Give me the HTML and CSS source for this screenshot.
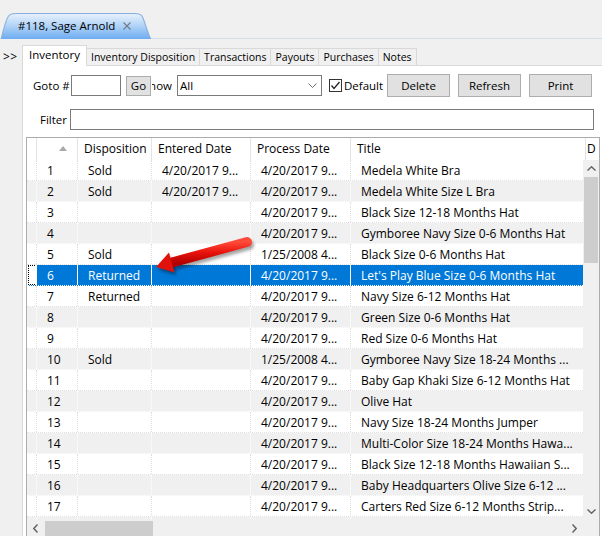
FILE: index.html
```html
<!DOCTYPE html>
<html lang="en">
<head>
    <meta charset="UTF-8">
    <title>#118, Sage Arnold - Inventory</title>
    <link rel="stylesheet" href="styles.css">
</head>
<body>
    <div class="doc-strip">
        <div class="doc-tab">
            <svg class="doc-tab-bg" viewBox="0 0 152 25" preserveAspectRatio="none">
                <defs>
                    <linearGradient id="tabFill" x1="0" y1="0" x2="0" y2="1">
                        <stop offset="0" stop-color="#e9f2fc"/>
                        <stop offset="0.45" stop-color="#b3d4f7"/>
                        <stop offset="1" stop-color="#6aabf0"/>
                    </linearGradient>
                </defs>
                <path d="M1,25.5 C4,14 6,5 9,2.5 Q11,0.5 16,0.5 L135,0.5 Q140,0.5 142,3 C145,8 147,18 151,25.5 Z" fill="url(#tabFill)" stroke="#86aedd"/>
            </svg>
            <span class="doc-tab-title">#118, Sage Arnold</span>
            <svg class="doc-tab-close" width="8" height="8" viewBox="0 0 8 8">
                <path d="M0.5,0.5 L7.5,7.5 M7.5,0.5 L0.5,7.5" stroke="#6f7a86" stroke-width="1.1"/>
            </svg>
        </div>
    </div>

    <div class="workspace">
        <div class="side">&gt;&gt;</div>
        <div class="main">
            <div class="tabs">
                <div class="tab active">Inventory</div>
                <div class="tab">Inventory Disposition</div>
                <div class="tab">Transactions</div>
                <div class="tab">Payouts</div>
                <div class="tab">Purchases</div>
                <div class="tab">Notes</div>
            </div>

            <div class="panel">
                <div class="toolbar">
                    <span class="goto-label">Goto #</span>
                    <input class="text-input goto-input" type="text">
                    <button class="btn go-btn">Go</button>
                    <span class="show-label"><span>Show</span></span>
                    <div class="select">
                        <span>All</span>
                        <svg width="9" height="5" viewBox="0 0 9 5"><polyline points="0.5,0.5 4.5,4.5 8.5,0.5" fill="none" stroke="#6b6b6b"/></svg>
                    </div>
                    <svg class="checkbox" width="13" height="13" viewBox="0 0 13 13">
                        <rect x="0.5" y="0.5" width="12" height="12" fill="#fff" stroke="#333"/>
                        <polyline points="2.5,6.5 5,9.5 10.5,3" fill="none" stroke="#222" stroke-width="1.3"/>
                    </svg>
                    <span class="check-label">Default</span>
                    <div class="actions">
                        <button class="btn action-btn">Delete</button>
                        <button class="btn action-btn">Refresh</button>
                        <button class="btn action-btn">Print</button>
                    </div>
                </div>

                <div class="filter-row">
                    <span class="filter-label">Filter</span>
                    <input class="text-input filter-input" type="text">
                </div>

                <div class="grid">
                    <div class="grid-head">
                        <div class="hcell"></div>
                        <div class="hcell sort-cell">
                            <svg width="8" height="5" viewBox="0 0 8 5"><polygon points="4,0 8,5 0,5" fill="#a9a9a9"/></svg>
                        </div>
                        <div class="hcell">Disposition</div>
                        <div class="hcell">Entered Date</div>
                        <div class="hcell">Process Date</div>
                        <div class="hcell">Title</div>
                        <div class="hcell">D</div>
                    </div>

                    <div class="grid-body">
                        <div class="rows">
                            <div class="row"><div class="cell rh"></div><div class="cell">1</div><div class="cell">Sold</div><div class="cell">4/20/2017 9...</div><div class="cell">4/20/2017 9...</div><div class="cell">Medela White Bra</div></div>
                            <div class="row"><div class="cell rh"></div><div class="cell">2</div><div class="cell">Sold</div><div class="cell">4/20/2017 9...</div><div class="cell">4/20/2017 9...</div><div class="cell">Medela White Size L Bra</div></div>
                            <div class="row"><div class="cell rh"></div><div class="cell">3</div><div class="cell"></div><div class="cell"></div><div class="cell">4/20/2017 9...</div><div class="cell">Black Size 12-18 Months Hat</div></div>
                            <div class="row"><div class="cell rh"></div><div class="cell">4</div><div class="cell"></div><div class="cell"></div><div class="cell">4/20/2017 9...</div><div class="cell">Gymboree Navy Size 0-6 Months Hat</div></div>
                            <div class="row"><div class="cell rh"></div><div class="cell">5</div><div class="cell">Sold</div><div class="cell"></div><div class="cell">1/25/2008 4...</div><div class="cell">Black Size 0-6 Months Hat</div></div>
                            <div class="row selected"><div class="cell rh"><span class="focus-rect"></span></div><div class="cell">6</div><div class="cell">Returned</div><div class="cell"></div><div class="cell">4/20/2017 9...</div><div class="cell">Let's Play Blue Size 0-6 Months Hat</div></div>
                            <div class="row"><div class="cell rh"></div><div class="cell">7</div><div class="cell">Returned</div><div class="cell"></div><div class="cell">4/20/2017 9...</div><div class="cell">Navy Size 6-12 Months Hat</div></div>
                            <div class="row"><div class="cell rh"></div><div class="cell">8</div><div class="cell"></div><div class="cell"></div><div class="cell">4/20/2017 9...</div><div class="cell">Green Size 0-6 Months Hat</div></div>
                            <div class="row"><div class="cell rh"></div><div class="cell">9</div><div class="cell"></div><div class="cell"></div><div class="cell">4/20/2017 9...</div><div class="cell">Red Size 0-6 Months Hat</div></div>
                            <div class="row"><div class="cell rh"></div><div class="cell">10</div><div class="cell">Sold</div><div class="cell"></div><div class="cell">1/25/2008 4...</div><div class="cell">Gymboree Navy Size 18-24 Months ...</div></div>
                            <div class="row"><div class="cell rh"></div><div class="cell">11</div><div class="cell"></div><div class="cell"></div><div class="cell">4/20/2017 9...</div><div class="cell">Baby Gap Khaki Size 6-12 Months Hat</div></div>
                            <div class="row"><div class="cell rh"></div><div class="cell">12</div><div class="cell"></div><div class="cell"></div><div class="cell">4/20/2017 9...</div><div class="cell">Olive Hat</div></div>
                            <div class="row"><div class="cell rh"></div><div class="cell">13</div><div class="cell"></div><div class="cell"></div><div class="cell">4/20/2017 9...</div><div class="cell">Navy Size 18-24 Months Jumper</div></div>
                            <div class="row"><div class="cell rh"></div><div class="cell">14</div><div class="cell"></div><div class="cell"></div><div class="cell">4/20/2017 9...</div><div class="cell">Multi-Color Size 18-24 Months Hawa...</div></div>
                            <div class="row"><div class="cell rh"></div><div class="cell">15</div><div class="cell"></div><div class="cell"></div><div class="cell">4/20/2017 9...</div><div class="cell">Black Size 12-18 Months Hawaiian S...</div></div>
                            <div class="row"><div class="cell rh"></div><div class="cell">16</div><div class="cell"></div><div class="cell"></div><div class="cell">4/20/2017 9...</div><div class="cell">Baby Headquarters Olive Size 6-12 ...</div></div>
                            <div class="row"><div class="cell rh"></div><div class="cell">17</div><div class="cell"></div><div class="cell"></div><div class="cell">4/20/2017 9...</div><div class="cell">Carters Red Size 6-12 Months Strip...</div></div>
                            <div class="row"><div class="cell rh"></div><div class="cell"></div><div class="cell"></div><div class="cell"></div><div class="cell"></div><div class="cell"></div></div>
                        </div>
                        <div class="vscroll">
                            <div class="sb-btn">
                                <svg width="9" height="5" viewBox="0 0 9 5"><polyline points="0.5,4.5 4.5,0.8 8.5,4.5" fill="none" stroke="#606060" stroke-width="1.4"/></svg>
                            </div>
                            <div class="vthumb"></div>
                            <div class="sb-track"></div>
                            <div class="sb-btn">
                                <svg width="9" height="5" viewBox="0 0 9 5"><polyline points="0.5,0.5 4.5,4.2 8.5,0.5" fill="none" stroke="#606060" stroke-width="1.4"/></svg>
                            </div>
                        </div>
                    </div>

                    <div class="grid-foot">
                        <div class="hscroll">
                            <div class="sb-btn">
                                <svg width="5" height="9" viewBox="0 0 5 9"><polyline points="4.5,0.5 0.8,4.5 4.5,8.5" fill="none" stroke="#606060" stroke-width="1.4"/></svg>
                            </div>
                            <div class="hthumb"></div>
                            <div class="sb-track"></div>
                            <div class="sb-btn">
                                <svg width="5" height="9" viewBox="0 0 5 9"><polyline points="0.5,0.5 4.2,4.5 0.5,8.5" fill="none" stroke="#606060" stroke-width="1.4"/></svg>
                            </div>
                        </div>
                        <div class="corner"></div>
                    </div>
                </div>
            </div>
        </div>
    </div>

    <!-- red callout arrow pasted over the grid -->
    <svg class="callout" width="602" height="536" viewBox="0 0 602 536">
        <defs>
            <linearGradient id="arrowRed" x1="0" y1="0" x2="0" y2="1">
                <stop offset="0" stop-color="#ff4a3a"/>
                <stop offset="0.5" stop-color="#e8130c"/>
                <stop offset="1" stop-color="#b30000"/>
            </linearGradient>
            <filter id="arrowShadow" x="-10%" y="-30%" width="130%" height="180%">
                <feGaussianBlur stdDeviation="1.5"/>
            </filter>
        </defs>
        <g transform="translate(2,3)" fill="rgba(0,0,0,0.35)" stroke="rgba(0,0,0,0.35)" filter="url(#arrowShadow)">
            <line x1="247" y1="242" x2="170" y2="263" stroke-width="10" stroke-linecap="round"/>
            <polygon points="156,267 169,252.5 174.5,272.5" stroke="none"/>
        </g>
        <line x1="247" y1="242" x2="170" y2="263" stroke="url(#arrowRed)" stroke-width="10" stroke-linecap="round"/>
        <polygon points="156,267 169,252.5 174.5,272.5" fill="#e0120b"/>
    </svg>
</body>
</html>
```

FILE: styles.css
```css
* {
    box-sizing: border-box;
}
html, body {
    height: 100%;
}
body {
    margin: 0;
    overflow: hidden;
    position: relative;
    background: #f0f0f0;
    font-family: 'Open Sans', 'Noto Sans', sans-serif;
    font-size: 12px;
    color: #000;
}

/* document tab strip */
.doc-strip {
    height: 39px;
    padding-top: 13px;
    border-bottom: 1px solid #d3dee9;
}
.doc-tab {
    position: relative;
    width: 152px;
    height: 25px;
    display: flex;
    align-items: center;
    padding: 0 21px 0 18px;
    margin-bottom: -1px;
}
.doc-tab-bg {
    position: absolute;
    left: 0;
    top: 0;
    width: 100%;
    height: 26px;
}
.doc-tab-title {
    position: relative;
    font-size: 11.5px;
    white-space: nowrap;
}
.doc-tab-close {
    position: relative;
    margin-left: auto;
    margin-top: 1px;
}

/* workspace */
.workspace {
    display: flex;
}
.side {
    width: 22px;
    padding: 10px 0 0 3px;
    line-height: 16px;
    letter-spacing: 0.5px;
}
.main {
    flex: 1;
    display: flex;
    flex-direction: column;
}
.tabs {
    margin-top: 6px;
    display: flex;
    align-items: flex-end;
    height: 20px;
    font-size: 10.5px;
}
.tab {
    height: 18px;
    line-height: 16px;
    padding: 0 4px;
    margin-bottom: -1px;
    margin-left: -1px;
    border: 1px solid #d9d9d9;
    background: #f0f0f0;
    white-space: nowrap;
}
.tab.active {
    position: relative;
    z-index: 1;
    height: 21px;
    margin-left: 0;
    padding: 0 6px 0 6px;
    line-height: 17px;
    font-size: 11.5px;
    background: #fff;
    border-bottom: none;
}

/* panel */
.panel {
    height: 480px;
    background: #fff;
    border-top: 1px solid #d9d9d9;
    border-left: 1px solid #d9d9d9;
    padding: 8px 0 0 3px;
}
.toolbar {
    display: flex;
    align-items: center;
    height: 23px;
    padding: 0 10px 0 7px;
    font-size: 11.5px;
    white-space: nowrap;
}
.toolbar > * {
    flex: none;
}
.goto-label {
    width: 38px;
}
.text-input {
    height: 21px;
    border: 1px solid #7a7a7a;
    background: #fff;
    padding: 0 2px;
    font: inherit;
    margin: 0;
}
.goto-input {
    width: 50px;
}
.btn {
    font: inherit;
    color: #000;
    background: #e1e1e1;
    border: 1px solid #adadad;
    margin: 0;
    padding: 0;
}
.go-btn {
    width: 25px;
    height: 20px;
    margin-left: 5px;
}
.show-label {
    width: 20px;
    margin-left: 1px;
    overflow: hidden;
    display: flex;
    justify-content: flex-end;
}
.select {
    width: 145px;
    height: 21px;
    margin-left: 5px;
    border: 1px solid #7a7a7a;
    display: flex;
    align-items: center;
    justify-content: space-between;
    padding: 0 4px 0 2px;
}
.checkbox {
    margin-left: 7px;
}
.check-label {
    margin-left: 2px;
}
.actions {
    margin-left: auto;
    display: flex;
    gap: 8px;
}
.action-btn {
    width: 63px;
    height: 23px;
}

.filter-row {
    display: flex;
    align-items: center;
    margin-top: 12px;
    padding-left: 14px;
    font-size: 11.5px;
}
.filter-label {
    width: 30px;
}
.filter-input {
    width: 524px;
}

/* data grid */
.grid {
    width: 574px;
    margin-top: 7px;
    border: 1px solid #acacac;
    border-bottom: none;
}
.grid-head {
    display: grid;
    grid-template-columns: 10px 41px 74px 99px 100px 235px 1fr;
    height: 22px;
}
.hcell {
    line-height: 22px;
    padding-left: 6px;
    border-right: 1px solid #e3e3e3;
    white-space: nowrap;
    overflow: hidden;
}
.hcell:last-child {
    border-right: none;
    padding-left: 1px;
}
.sort-cell {
    display: flex;
    align-items: center;
    padding-left: 22px;
    padding-bottom: 2px;
}

.grid-body {
    display: flex;
    height: 360px;
}
.rows {
    width: 556px;
    overflow: hidden;
}
.row {
    display: grid;
    grid-template-columns: 10px 41px 74px 99px 100px 232px;
    height: 21px;
    border-bottom: 1px dotted #e2e2e2;
}
.row:nth-child(even) {
    background: #f0f0f0;
    border-bottom-color: #fff;
}
.cell {
    line-height: 21px;
    padding-left: 10px;
    border-right: 1px dotted #dedede;
    white-space: nowrap;
    overflow: hidden;
}
.row:nth-child(even) .cell {
    border-right-color: #fff;
}
.cell:last-child {
    border-right: none;
}
.cell.rh {
    padding: 0;
}
.row.selected {
    background: #0078d7;
    color: #fff;
}
.row.selected .cell {
    border-right: 1px solid #fff;
}
.row.selected .cell:last-child {
    border-right: none;
}
.row.selected .cell.rh {
    background: #fff;
}
.focus-rect {
    display: block;
    margin: 0 0 0 1px;
    width: 9px;
    height: 20px;
    border: 1px dotted #000;
}

/* scrollbars */
.vscroll {
    width: 16px;
    background: #f0f0f0;
    display: flex;
    flex-direction: column;
}
.sb-btn {
    flex: none;
    width: 16px;
    height: 17px;
    display: flex;
    align-items: center;
    justify-content: center;
}
.vthumb {
    height: 86px;
    margin: 0 1px;
    background: #cdcdcd;
}
.sb-track {
    flex: 1;
}
.grid-foot {
    display: flex;
    height: 17px;
}
.hscroll {
    width: 556px;
    display: flex;
    background: #f0f0f0;
}
.hscroll .sb-btn {
    width: 17px;
    height: 17px;
}
.hthumb {
    width: 108px;
    margin: 1px 0 0 1px;
    background: #cdcdcd;
}
.corner {
    flex: 1;
    background: #f0f0f0;
}

/* callout arrow drawn over the screenshot */
.callout {
    position: absolute;
    left: 0;
    top: 0;
    pointer-events: none;
}
```
